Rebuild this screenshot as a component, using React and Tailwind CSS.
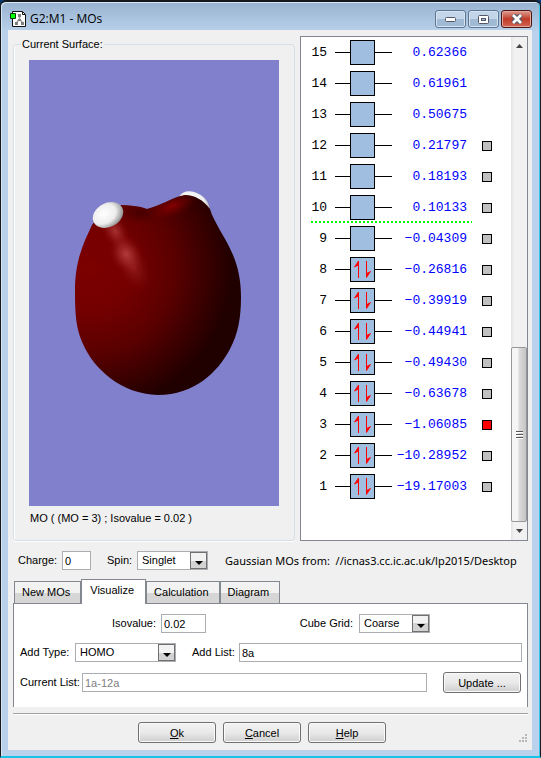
import { useState } from 'react'

const orbitals = [
  { id: 15, energy: '0.62366' },
  { id: 14, energy: '0.61961' },
  { id: 13, energy: '0.50675' },
  { id: 12, energy: '0.21797', listed: true },
  { id: 11, energy: '0.18193', listed: true },
  { id: 10, energy: '0.10133', listed: true, divider: true },
  { id: 9, energy: '−0.04309', listed: true },
  { id: 8, energy: '−0.26816', listed: true, occupied: true },
  { id: 7, energy: '−0.39919', listed: true, occupied: true },
  { id: 6, energy: '−0.44941', listed: true, occupied: true },
  { id: 5, energy: '−0.49430', listed: true, occupied: true },
  { id: 4, energy: '−0.63678', listed: true, occupied: true },
  { id: 3, energy: '−1.06085', listed: true, occupied: true },
  { id: 2, energy: '−10.28952', listed: true, occupied: true },
  { id: 1, energy: '−19.17003', listed: true, occupied: true },
]

const tabs = ['New MOs', 'Visualize', 'Calculation', 'Diagram']

function AppIcon() {
  return (
    <svg width="16" height="16" viewBox="0 0 16 16" aria-hidden="true">
      <path d="M2.500 .5h10l3 3v12h-13z" fill="#fff" stroke="#111" />
      <path d="M12.500 1v2.500H15" fill="none" stroke="#111" />
      <path d="M9.500 4v5M9 8.500l-3 4M10 8.500l3 4" stroke="#a0a0a0" strokeWidth="1.500" fill="none" />
      <path d="M8 3h3v3H8zM8 8h3v2H8zM5 11h3v3H5zM11 11h3v3h-3z" fill="#808080" />
      <path d="M.5 2.500h5v5h-5z" fill="#0f0" stroke="#003c00" />
    </svg>
  )
}

function TitleBar() {
  const plain =
    'flex h-[18px] w-[31px] items-center justify-center rounded-[3px] border border-[#5f7691] bg-linear-to-b from-[#c3d5e9] from-50% to-[#a0b9d4] to-50% shadow-[inset_0_0_0_1px_#d5e3f2]'
  return (
    <header className="flex h-[28px] items-center justify-between">
      <div className="flex items-center gap-1 pt-[6px] pl-[2px]">
        <AppIcon />
        <h1 className="font-['Open_Sans',sans-serif] text-[12px] leading-4 text-black">G2:M1 - MOs</h1>
      </div>
      <div className="flex gap-[2px] pt-[6px]">
        <button type="button" aria-label="Minimize" className={plain}>
          <svg width="12" height="6" viewBox="0 0 12 6">
            <rect x=".5" y="1.500" width="10" height="4" rx="1" fill="#fff" stroke="#535666" />
          </svg>
        </button>
        <button type="button" aria-label="Maximize" className={plain}>
          <svg width="11" height="9" viewBox="0 0 11 9">
            <rect x=".5" y=".5" width="10" height="8" rx="1" fill="#fff" stroke="#535666" />
            <rect x="3.500" y="3.500" width="4" height="2" fill="#a9bfd8" stroke="#535666" />
          </svg>
        </button>
        <button
          type="button"
          aria-label="Close"
          className="flex h-[18px] w-[31px] items-center justify-center rounded-[3px] border border-[#4d1414] bg-linear-to-b from-[#dc9a90] from-0% via-[#c03a27] via-50% to-[#cf6552] shadow-[inset_0_0_0_1px_#e3a79c]"
        >
          <svg width="12" height="10" viewBox="0 0 12 10">
            <path d="M2 1l8 8M10 1L2 9" stroke="#535666" strokeWidth="5" />
            <path d="M2 1l8 8M10 1L2 9" stroke="#fff" strokeWidth="2.800" />
          </svg>
        </button>
      </div>
    </header>
  )
}

function SurfaceView() {
  return (
    <svg
      className="block h-[446px] w-full bg-[#8080cc]"
      viewBox="29 60 250 446"
      preserveAspectRatio="xMidYMid slice"
      role="img"
      aria-label="Orbital surface"
    >
      <defs>
        <radialGradient id="body" gradientUnits="userSpaceOnUse" cx="90" cy="268" r="142">
          <stop offset="0" stopColor="#7c0000" />
          <stop offset=".3" stopColor="#740000" />
          <stop offset=".6" stopColor="#5a0000" />
          <stop offset=".82" stopColor="#3a0000" />
          <stop offset="1" stopColor="#210000" />
        </radialGradient>
        <radialGradient id="shine">
          <stop offset="0" stopColor="#c85050" stopOpacity=".75" />
          <stop offset=".45" stopColor="#b84040" stopOpacity=".4" />
          <stop offset="1" stopColor="#900000" stopOpacity="0" />
        </radialGradient>
        <radialGradient id="ridge">
          <stop offset="0" stopColor="#8c0000" stopOpacity=".9" />
          <stop offset="1" stopColor="#700000" stopOpacity="0" />
        </radialGradient>
        <radialGradient id="shade">
          <stop offset="0" stopColor="#380000" stopOpacity=".6" />
          <stop offset="1" stopColor="#400000" stopOpacity="0" />
        </radialGradient>
        <radialGradient id="atom" cx=".4" cy=".38" r=".65">
          <stop offset="0" stopColor="#fff" />
          <stop offset=".6" stopColor="#ededed" />
          <stop offset="1" stopColor="#909090" />
        </radialGradient>
        <clipPath id="outline">
          <path d="M92 225C84 242 75 260 75 290C75 315 76 328 83 344C94 369 121 394 158 395C194 395 218 372 230 349C238 334 241 318 241 297C241 280 238 267 233 255C226 238 213 221 210 209C203 200 195 195 185 195C173 197 160 206 147 209C139 206 130 205 120 205L105 208Z" />
        </clipPath>
      </defs>
      <ellipse cx="194" cy="205" rx="17" ry="12" transform="rotate(34 194 205)" fill="url(#atom)" />
      <g clipPath="url(#outline)">
        <rect x="70" y="190" width="180" height="210" fill="url(#body)" />
        <ellipse cx="140" cy="213" rx="24" ry="11" fill="url(#shade)" />
        <ellipse cx="172" cy="206" rx="26" ry="11" transform="rotate(-22 172 206)" fill="url(#ridge)" />
        <ellipse cx="115" cy="231" rx="13" ry="22" transform="rotate(-28 115 231)" fill="url(#shine)" opacity=".8" />
        <ellipse cx="126" cy="254" rx="17" ry="21" transform="rotate(-28 126 254)" fill="url(#shine)" />
        <ellipse cx="134" cy="268" rx="16" ry="26" transform="rotate(-22 134 268)" fill="url(#shine)" opacity=".4" />
      </g>
      <ellipse cx="108" cy="215" rx="16" ry="12" transform="rotate(-28 108 215)" fill="url(#atom)" />
    </svg>
  )
}

function SpinPair() {
  return (
    <svg width="19" height="19" viewBox="0 0 19 19" fill="#f00" stroke="#f00" aria-hidden="true">
      <path d="M5.500 18V1" />
      <path d="M5.500 1v4L1.500 7z" strokeWidth=".8" />
      <path d="M13.500 1v16" />
      <path d="M13.500 17.500v-4l4-2z" strokeWidth=".8" />
    </svg>
  )
}

function OrbitalRow({ orbital, checked, onToggle }) {
  return (
    <li>
      <div className="flex h-[31px] items-center font-['Liberation_Mono',monospace] text-[13px] leading-4">
        <span className="w-[26px] text-right text-black">{orbital.id}</span>
        <span className="ml-2 h-px w-[15px] bg-black" />
        <span className="flex size-[25px] items-center justify-center border border-black bg-[#a0bfe0]">
          {orbital.occupied && <SpinPair />}
        </span>
        <span className="h-px w-[17px] bg-black" />
        <span className="w-[75px] text-right text-[#0000ff]">{orbital.energy}</span>
        {orbital.listed && (
          <input
            type="checkbox"
            aria-label={`Orbital ${orbital.id}`}
            checked={checked}
            onChange={onToggle}
            className="ml-[15px] size-[10px] appearance-none border border-black bg-[#c0c0c0] checked:bg-[#ff0000]"
          />
        )}
      </div>
      {orbital.divider && (
        <div className="-mt-[2px] ml-[10px] h-[2px] w-[161px] bg-[repeating-linear-gradient(90deg,#00ff00_0_2px,#ffffff_2px_4px)]" />
      )}
    </li>
  )
}

function ScrollBar() {
  return (
    <div className="flex w-4 shrink-0 flex-col items-center bg-linear-to-r from-[#e3e3e3] to-[#f1f1f1] to-20%">
      <button type="button" aria-label="Scroll up" className="flex h-[17px] w-full items-center justify-center">
        <svg width="7" height="4" viewBox="0 0 7 4"><path d="M0 4L3.500 0L7 4z" fill="#444" /></svg>
      </button>
      <div className="flex w-full flex-1 flex-col justify-end">
        <div className="flex h-[175px] flex-col items-center justify-center gap-px rounded-[2px] border border-[#979797] bg-linear-to-r from-[#f5f5f5] from-40% via-[#dcdcdc] via-50% to-[#c4c4c4]">
          <span className="h-[2px] w-[7px] border-b border-[#fff] bg-[#555]" />
          <span className="h-[2px] w-[7px] border-b border-[#fff] bg-[#555]" />
          <span className="h-[2px] w-[7px] border-b border-[#fff] bg-[#555]" />
        </div>
      </div>
      <button type="button" aria-label="Scroll down" className="flex h-[18px] w-full items-center justify-center">
        <svg width="7" height="4" viewBox="0 0 7 4"><path d="M0 0L3.500 4L7 0z" fill="#444" /></svg>
      </button>
    </div>
  )
}

function Dropdown({ id, options, className }) {
  return (
    <div className={`relative h-[19px] border border-[#abadb3] bg-white ${className}`}>
      <select id={id} className="block h-[17px] w-full appearance-none bg-transparent pr-4 pb-px pl-1 leading-4 outline-none">
        {options.map((option) => (
          <option key={option}>{option}</option>
        ))}
      </select>
      <span className="pointer-events-none absolute top-0 right-0 flex h-[17px] w-[17px] items-center justify-center border border-[#707070] bg-linear-to-b from-[#f2f2f2] from-50% to-[#d2d2d2] to-50% pt-1">
        <svg width="8" height="4" viewBox="0 0 8 4"><path d="M0 0h8L4 4z" fill="#000" /></svg>
      </span>
    </div>
  )
}

const field = 'h-[19px] border border-[#abadb3] bg-white px-[2px] leading-4 outline-none'
const pushButton =
  'h-[21px] rounded-[3px] border border-[#707070] bg-linear-to-b from-[#f2f2f2] from-0% via-[#e9e9e9] via-50% to-[#cfcfcf] text-center leading-4 shadow-[inset_0_0_0_1px_#fafafa]'

function App() {
  const [selected, setSelected] = useState([3])
  const [activeTab, setActiveTab] = useState('Visualize')

  const toggle = (id) => {
    setSelected(selected.includes(id) ? selected.filter((item) => item !== id) : [...selected, id])
  }

  return (
    <div className="bg-linear-to-b from-[#0a3a78] to-black to-5%">
      <div className="rounded-t-[6px] border border-t-2 border-b-2 border-[#15181c] border-b-[#15c4e6] bg-[#b9d1ea] bg-linear-to-b from-[#98b3d1] to-[#b9d1ea] to-[30px] pr-2 pb-[6px] pl-[7px] font-['Liberation_Sans',sans-serif] text-[11px] text-black shadow-[inset_1px_1px_0_#d8e6f4,inset_-1px_0_0_#35c6ea]">
        <TitleBar />

        <main className="bg-[#f0f0f0] pt-[6px] pr-1 pb-[7px] pl-[5px]">
          {/* Surface and orbital list */}
          <div className="grid grid-cols-[282fr_228fr] gap-[5px]">
            <fieldset className="min-w-0 rounded-[3px] border border-[#d5dfe5] px-[15px] shadow-[inset_1px_0_0_#fff,0_1px_0_#fff]">
              <legend className="-ml-2 px-px leading-4">Current Surface:</legend>
              <div className="pt-[8px]">
                <SurfaceView />
                <p className="pt-1 pb-[14px] pl-px leading-4">MO ( (MO = 3) ; Isovalue = 0.02 )</p>
              </div>
            </fieldset>
            <section className="flex min-w-0 justify-between border border-[#828790] bg-white">
              <ul>
                {orbitals.map((orbital) => (
                  <OrbitalRow
                    key={orbital.id}
                    orbital={orbital}
                    checked={selected.includes(orbital.id)}
                    onToggle={() => toggle(orbital.id)}
                  />
                ))}
              </ul>
              <ScrollBar />
            </section>
          </div>

          {/* Charge and spin */}
          <div className="flex items-center pt-[10px] pr-[6px] pl-[5px]">
            <label htmlFor="charge" className="w-[44px]">Charge:</label>
            <input id="charge" defaultValue="0" className={`${field} w-[29px]`} />
            <label htmlFor="spin" className="ml-4 w-[30px]">Spin:</label>
            <Dropdown id="spin" options={['Singlet', 'Triplet']} className="w-[71px] shrink-0" />
            <p className="ml-[17px] min-w-0 flex-1 overflow-hidden font-['Noto_Sans',sans-serif] leading-4 whitespace-pre">
              Gaussian MOs from:  //icnas3.cc.ic.ac.uk/lp2015/Desktop
            </p>
          </div>

          {/* Tabs */}
          <div role="tablist" className="mt-[9px] flex h-[24px] items-end pl-px">
            {tabs.map((tab) => (
              <button
                key={tab}
                type="button"
                role="tab"
                aria-selected={tab === activeTab}
                onClick={() => setActiveTab(tab)}
                className={`border border-b-0 border-[#828790] text-left ${
                  tab === activeTab
                    ? 'z-10 -mb-px h-[25px] bg-white pr-[11px] pb-1 pl-2'
                    : 'h-[22px] bg-linear-to-b from-[#f2f2f2] from-50% to-[#d6d6d6] to-50% pr-[10px] pl-[7px]'
                }`}
              >
                {tab}
              </button>
            ))}
          </div>
          <div role="tabpanel" className="flex flex-col gap-[10px] border border-b-0 border-[#828790] bg-white pt-[10px] pr-[5px] pb-[14px] pl-[6px]">
            <div className="flex items-center pr-[92px] pl-[92px]">
              <label htmlFor="isovalue" className="w-[49px]">Isovalue:</label>
              <input id="isovalue" defaultValue="0.02" className={`${field} w-[45px]`} />
              <label htmlFor="grid" className="ml-auto pr-[6px]">Cube Grid:</label>
              <Dropdown id="grid" options={['Coarse', 'Medium', 'Fine']} className="w-[71px]" />
            </div>
            <div className="flex items-center">
              <label htmlFor="type" className="w-[55px]">Add Type:</label>
              <Dropdown id="type" options={['HOMO', 'LUMO']} className="w-[101px]" />
              <label htmlFor="list" className="ml-4 w-[47px]">Add List:</label>
              <input id="list" defaultValue="8a" className={`${field} min-w-0 flex-1`} />
            </div>
            <div className="flex items-center">
              <label htmlFor="current" className="w-[62px]">Current List:</label>
              <input id="current" readOnly value="1a-12a" className={`${field} min-w-0 flex-1 text-[#808080]`} />
              <button type="button" className={`${pushButton} mr-px ml-4 w-[78px]`}>Update ...</button>
            </div>
          </div>

          {/* Dialog buttons */}
          <footer className="mt-[6px] flex items-end border-t border-[#a0a0a0] pt-2 shadow-[inset_0_1px_0_#fff]">
            <div className="flex flex-1 justify-center gap-[7px] pr-2">
              <button type="button" className={`${pushButton} w-[78px]`}><u>O</u>k</button>
              <button type="button" className={`${pushButton} w-[78px]`}><u>C</u>ancel</button>
              <button type="button" className={`${pushButton} w-[78px]`}><u>H</u>elp</button>
            </div>
            <svg width="9" height="9" viewBox="0 0 9 9" fill="#b8b8b8" aria-hidden="true">
              <path d="M6 0h2v2H6zM3 3h2v2H3zM6 3h2v2H6zM0 6h2v2H0zM3 6h2v2H3zM6 6h2v2H6z" />
            </svg>
          </footer>
        </main>
      </div>
    </div>
  )
}

export default App
